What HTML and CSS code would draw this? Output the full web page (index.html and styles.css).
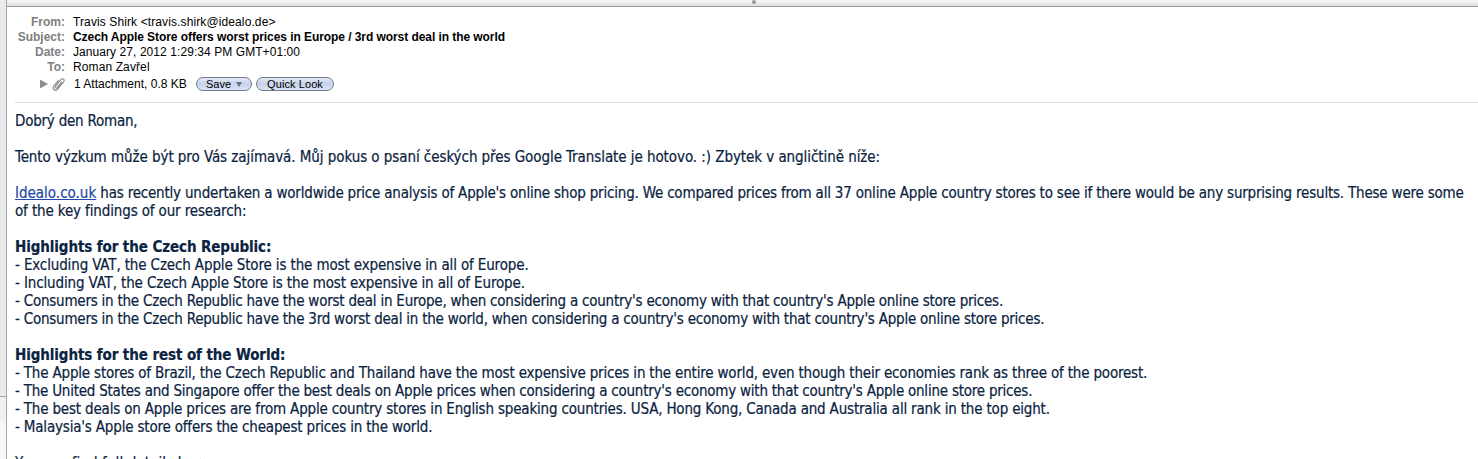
FILE: index.html
```html
<!DOCTYPE html>
<html lang="en">
<head>
    <meta charset="UTF-8">
    <meta name="viewport" content="width=device-width, initial-scale=1.0">
    <title>Mail</title>
    <link rel="stylesheet" href="styles.css">
</head>
<body>
    <div class="window">
        <aside class="sidebar">
            <div class="sidebar-top"></div>
            <div class="sidebar-mid"></div>
        </aside>

        <main class="message">
            <div class="splitter"><span class="grip"></span></div>

            <header class="headers">
                <div class="row"><span class="label">From:</span><span class="value from">Travis Shirk &lt;travis.shirk@idealo.de&gt;</span></div>
                <div class="row"><span class="label">Subject:</span><span class="value subject">Czech Apple Store offers worst prices in Europe / 3rd worst deal in the world</span></div>
                <div class="row"><span class="label">Date:</span><span class="value date">January 27, 2012 1:29:34 PM GMT+01:00</span></div>
                <div class="row"><span class="label">To:</span><span class="value to">Roman Zavřel</span></div>
                <div class="attachments">
                    <svg class="disclosure" width="8" height="10" viewBox="0 0 8 10"><path d="M0 0.5L8 5L0 9.5Z" fill="#8f8f8f"/></svg>
                    <svg class="clip" width="13" height="15" viewBox="0 0 13 15" fill="none" stroke="#858585" stroke-width="1.1" stroke-linecap="round" stroke-linejoin="round"><path d="M9.6 5.2L5.3 10.6C4.2 12 2.6 10.7 3.6 9.3L8.9 2.6C10.6 0.6 13.2 2.6 11.6 4.8L5.6 12.2C3.4 14.8-0.3 12.2 1.8 9.1L6.4 3.4"/></svg>
                    <span class="count">1 Attachment, 0.8 KB</span>
                    <button class="pill save">Save<svg width="6" height="5" viewBox="0 0 6 5"><path d="M0 0H6L3 5Z" fill="#667089"/></svg></button>
                    <button class="pill look">Quick Look</button>
                </div>
            </header>

            <article class="body">
                <p class="tight">Dobrý den Roman,</p>
                <p class="loose">Tento výzkum může být pro Vás zajímavá. Můj pokus o psaní českých přes Google Translate je hotovo. :) Zbytek v angličtině níže:</p>
                <p class="intro"><a href="#">Idealo.co.uk</a> has recently undertaken a worldwide price analysis of Apple's online shop pricing. We compared prices from all 37 online Apple country stores to see if there would be any surprising results. These were some<br><span class="medium">of the key findings of our research:</span></p>
                <p>
                    <strong>Highlights for the Czech Republic:</strong><br>
                    <span class="medium">- Excluding VAT, the Czech Apple Store is the most expensive in all of Europe.</span><br>
                    <span class="medium">- Including VAT, the Czech Apple Store is the most expensive in all of Europe.</span><br>
                    <span class="tight">- Consumers in the Czech Republic have the worst deal in Europe, when considering a country's economy with that country's Apple online store prices.</span><br>
                    <span class="tight">- Consumers in the Czech Republic have the 3rd worst deal in the world, when considering a country's economy with that country's Apple online store prices.</span>
                </p>
                <p>
                    <strong>Highlights for the rest of the World:</strong><br>
                    - The Apple stores of Brazil, the Czech Republic and Thailand have the most expensive prices in the entire world, even though their economies rank as three of the poorest.<br>
                    <span class="tight">- The United States and Singapore offer the best deals on Apple prices when considering a country's economy with that country's Apple online store prices.</span><br>
                    - The best deals on Apple prices are from Apple country stores in English speaking countries. USA, Hong Kong, Canada and Australia all rank in the top eight.<br>
                    - Malaysia's Apple store offers the cheapest prices in the world.
                </p>
                <p class="more">You can find full details here:</p>
            </article>
        </main>
    </div>
</body>
</html>
```

FILE: styles.css
```css
* {
    margin: 0;
    padding: 0;
    box-sizing: border-box;
}

body {
    background: #fff;
    overflow: hidden;
}

.window {
    display: flex;
    height: 459px;
    overflow: hidden;
}

.sidebar {
    width: 7px;
    flex-shrink: 0;
    background: #f7f7f7;
    border-right: 1px solid #a6a6a6;
}

.sidebar-top {
    height: 397px;
    background: #ebebeb;
    border-bottom: 1px solid #a6a6a6;
}

.sidebar-mid {
    height: 23px;
    background: #f0f0f0;
}

.message {
    flex: 1;
    min-width: 0;
}

.splitter {
    display: flex;
    justify-content: center;
    height: 7px;
    padding-left: 23px;
    background: linear-gradient(#f8f8f8, #dedede);
    border-bottom: 1px solid #9c9c9c;
}

.grip {
    width: 4px;
    height: 4px;
    border-radius: 50%;
    background: #9b9b9b;
}

.headers {
    height: 96px;
    margin-left: 8px;
    padding-top: 8px;
    border-bottom: 1px solid #dadada;
    font-family: "Liberation Sans", Arial, sans-serif;
    font-size: 12px;
    line-height: 15px;
    color: #000;
}

.row {
    display: flex;
    height: 15px;
    white-space: nowrap;
}

.label {
    width: 50px;
    margin-right: 8px;
    text-align: right;
    font-weight: bold;
    color: #808080;
}

.from,
.to {
    letter-spacing: 0.11px;
}

.subject {
    font-weight: bold;
    letter-spacing: -0.065px;
}

.date {
    letter-spacing: 0.07px;
}

.attachments {
    display: flex;
    align-items: center;
    height: 18px;
    padding-left: 25px;
}

.clip {
    margin-left: 4px;
}

.count {
    width: 122px;
    margin-left: 9px;
    white-space: nowrap;
}

.pill {
    display: flex;
    align-items: center;
    justify-content: center;
    height: 14px;
    border: 1px solid #76798a;
    border-radius: 7px;
    background: linear-gradient(#e3e9f5, #c6d2e9 50%, #d9e4f7);
    font-family: "Liberation Sans", Arial, sans-serif;
    font-size: 11px;
    line-height: 12px;
    color: #000;
}

.save {
    width: 56px;
    gap: 5px;
}

.look {
    width: 78px;
    margin-left: 4px;
    letter-spacing: 0.08px;
}

.body {
    padding: 9px 0 0 8px;
    font-family: "DejaVu Sans Condensed", "DejaVu Sans", sans-serif;
    font-stretch: condensed;
    font-size: 15px;
    line-height: 18px;
    letter-spacing: -0.18px;
    color: #0b2341;
    white-space: nowrap;
    -webkit-text-stroke: 0.2px;
}

.body p {
    margin-bottom: 18px;
}

.body a {
    color: #1f48a8;
    letter-spacing: 0;
}

.body strong {
    letter-spacing: -0.1px;
}

.intro {
    letter-spacing: -0.198px;
}

.loose {
    letter-spacing: -0.065px;
}

.medium {
    letter-spacing: -0.135px;
}

.tight {
    letter-spacing: -0.228px;
}

.more {
    letter-spacing: 0.1px;
}
```
